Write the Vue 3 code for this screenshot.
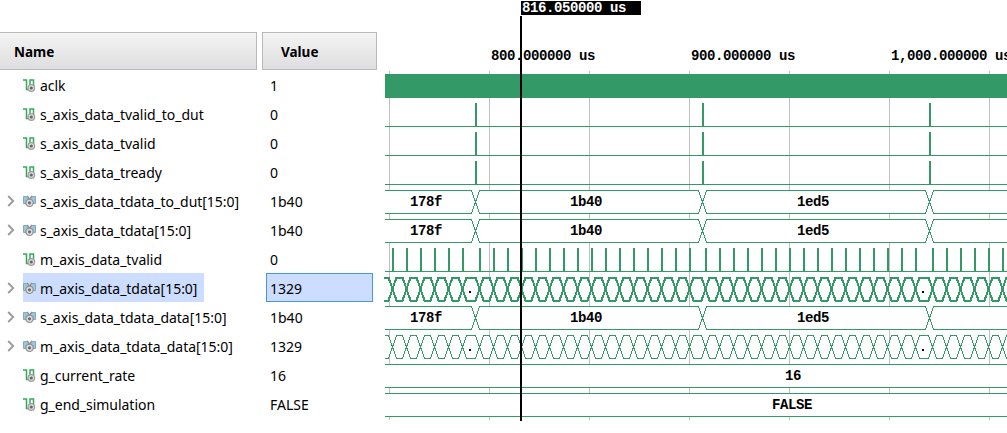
<script setup>
const signals = [
  { name: 'aclk', value: '1', kind: 'clock' },
  { name: 's_axis_data_tvalid_to_dut', value: '0', kind: 'pulse' },
  { name: 's_axis_data_tvalid', value: '0', kind: 'pulse' },
  { name: 's_axis_data_tready', value: '0', kind: 'pulse' },
  { name: 's_axis_data_tdata_to_dut[15:0]', value: '1b40', kind: 'slow', bus: true },
  { name: 's_axis_data_tdata[15:0]', value: '1b40', kind: 'slow', bus: true },
  { name: 'm_axis_data_tvalid', value: '0', kind: 'fastPulse' },
  { name: 'm_axis_data_tdata[15:0]', value: '1329', kind: 'fast', bus: true, selected: true },
  { name: 's_axis_data_tdata_data[15:0]', value: '1b40', kind: 'slow', bus: true },
  { name: 'm_axis_data_tdata_data[15:0]', value: '1329', kind: 'fast', bus: true },
  { name: 'g_current_rate', value: '16', kind: 'const', label: '16', labelX: 785 },
  { name: 'g_end_simulation', value: 'FALSE', kind: 'const', label: 'FALSE', labelX: 772 },
]

const grid = [389, 489, 589, 689, 789, 889, 989]
const slow = [475, 702, 929]
const series = (start, count) => Array.from({ length: count }, (_, i) => start + i * 14)
const fast = [...series(392, 6), ...series(479, 16), ...series(705, 16), ...series(932, 6)]

const slowLabels = [
  { text: '178f', x: 410 },
  { text: '1b40', x: 570 },
  { text: '1ed5', x: 797 },
]
const ticks = [
  { text: '800.000000 us', x: 491 },
  { text: '900.000000 us', x: 691 },
  { text: '1,000.000000 us', x: 891 },
]

const rowTop = (i) => 74 + i * 29

// Each bus value is a cell that narrows to a point at its transitions.
function cells(marks, top) {
  const t = top + 0.5
  const b = top + 23.5
  const m = top + 12
  const edges = [371, ...marks, 1022]
  let d = ''
  for (let i = 0; i < edges.length - 1; i++) {
    const l = edges[i] + 0.5
    const r = edges[i + 1] + 0.5
    d += `M${l} ${m}L${l + 4} ${t}H${r - 4}L${r} ${m}L${r - 4} ${b}H${l + 4}Z`
  }
  return d
}
</script>

<template>
  <div class="viewer">
    <div class="column names">
      <div class="head name-head">Name</div>
      <div v-for="s in signals" :key="s.name" class="row">
        <span class="expand">
          <svg v-if="s.bus" width="8" height="12" viewBox="0 0 8 12">
            <path d="M1.2 1L6.2 6L1.2 11" fill="none" stroke="#999" stroke-width="1.8" />
          </svg>
        </span>
        <div class="item" :class="{ selected: s.selected }">
          <svg v-if="s.bus" class="icon" width="13" height="13" viewBox="0 0 13 13">
            <path d="M.5 1.5H4.5L6.5 4.5L8.5 1.5H12.5V8.5H.5Z" fill="#9cc6dc" stroke="#7eabc3" />
            <path d="M4.2 .8L6.5 4.2L8.8 .8" fill="none" stroke="#8b8f92" stroke-width="1.2" />
            <circle cx="6.5" cy="7.8" r="3.7" fill="#dcdcdc" stroke="#8e8e8e" stroke-width="1.2" />
            <circle cx="6.5" cy="7.8" r="1.6" fill="#6c6c6c" />
          </svg>
          <svg v-else class="icon" width="13" height="13" viewBox="0 0 13 13">
            <path d="M0 1H3.5V10.5H7V1H10.5V7" fill="none" stroke="#36a85a" stroke-width="1.5" />
            <circle cx="8.3" cy="9" r="3.3" fill="#dadada" stroke="#a0a0a0" stroke-width="1.2" />
            <circle cx="8.3" cy="9" r="1.6" fill="#686868" />
          </svg>
          <span class="label">{{ s.name }}</span>
        </div>
      </div>
    </div>

    <div class="column values">
      <div class="head value-head">Value</div>
      <div v-for="s in signals" :key="s.name" class="row">
        <div class="value" :class="{ active: s.selected }">{{ s.value }}</div>
      </div>
    </div>

    <svg class="waves" width="623" height="433" viewBox="384 0 623 433">
      <clipPath id="plot">
        <rect x="385" y="0" width="622" height="433" />
      </clipPath>
      <rect v-for="x in grid" :key="x" :x="x" y="71" width="1" height="349" fill="#c0c0c0" />
      <text v-for="t in ticks" :key="t.text" :x="t.x" y="60">{{ t.text }}</text>

      <g v-for="(s, i) in signals" :key="s.name">
        <rect v-if="s.kind === 'clock'" x="385" :y="rowTop(i)" width="622" height="24" class="solid" />
        <template v-else-if="s.kind === 'pulse' || s.kind === 'fastPulse'">
          <rect x="385" :y="rowTop(i) + 23" width="622" height="1" class="solid" />
          <rect
            v-for="x in s.kind === 'pulse' ? slow : fast"
            :key="x"
            :x="x"
            :y="rowTop(i)"
            width="2"
            height="24"
            class="solid"
          />
        </template>
        <template v-else-if="s.kind === 'const'">
          <rect x="385" :y="rowTop(i)" width="622" height="24" fill="#fff" />
          <rect x="385" :y="rowTop(i)" width="622" height="1" class="solid" />
          <rect x="385" :y="rowTop(i) + 23" width="622" height="1" class="solid" />
          <text :x="s.labelX" :y="rowTop(i) + 16">{{ s.label }}</text>
        </template>
        <template v-else>
          <path
            :d="cells(s.kind === 'slow' ? slow : fast, rowTop(i))"
            class="cell"
            :class="{ thick: s.selected }"
            :clip-path="s.selected ? undefined : 'url(#plot)'"
          />
          <template v-if="s.kind === 'slow'">
            <text v-for="l in slowLabels" :key="l.text" :x="l.x" :y="rowTop(i) + 16">{{ l.text }}</text>
          </template>
          <template v-else>
            <rect x="469" :y="rowTop(i) + 14" width="2" height="2" />
            <rect x="922" :y="rowTop(i) + 14" width="2" height="2" />
          </template>
        </template>
      </g>

      <rect x="520" y="16" width="2" height="405" />
      <rect x="521" y="1" width="120" height="14" />
      <text x="522" y="12" class="cursor-time">816.050000 us</text>
    </svg>
  </div>
</template>

<style>
body {
  background: #fff;
}
</style>

<style scoped>
.viewer {
  display: flex;
  width: 1007px;
  height: 433px;
  overflow: hidden;
  background: #fff;
  color: #000;
  font: 14px/29px "Noto Sans", "Open Sans", sans-serif;
}
.column {
  padding-top: 32px;
  box-sizing: border-box;
}
.names {
  width: 257px;
  margin-right: 5px;
}
.values {
  width: 115px;
  margin-right: 7px;
}
.head {
  box-sizing: border-box;
  height: 38px;
  border: 1px solid #b9b9b9;
  background: linear-gradient(#f4f4f4, #dedee0);
  font-weight: 700;
  font-size: 13.5px;
  line-height: 38px;
}
.name-head {
  border-left: 0;
  padding-left: 14px;
}
.value-head {
  padding-left: 18px;
}
.row {
  display: flex;
  height: 29px;
}
.expand {
  width: 16px;
  padding-left: 7px;
  display: flex;
  align-items: center;
}
.expand svg {
  margin-top: 1px;
}
.item {
  display: flex;
  align-items: center;
  padding-right: 7px;
  white-space: nowrap;
}
.icon {
  flex: none;
  margin: 1px 4px 0 0;
}
.label {
  padding-top: 1px;
  letter-spacing: -0.03px;
}
.selected {
  background: #ccddff;
}
.value {
  box-sizing: border-box;
  width: 107px;
  margin-left: 4px;
  padding: 2px 0 0 4px;
  line-height: 28px;
}
.active {
  border: 1px solid #4499d8;
  padding: 1px 0 0 3px;
  background: #ccddff;
}
.waves {
  flex: none;
  display: block;
}
.waves text {
  font: 700 14px "Liberation Mono", monospace;
  letter-spacing: -0.401px;
}
.waves .cursor-time {
  fill: #fff;
}
.solid {
  fill: #339966;
}
.cell {
  fill: #fff;
  stroke: #339966;
  stroke-width: 1;
  shape-rendering: crispEdges;
}
.thick {
  stroke-width: 2;
}
</style>
